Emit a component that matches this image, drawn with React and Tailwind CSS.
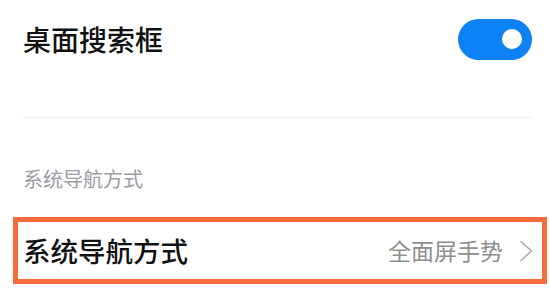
import React, { useState } from "react";

const font = { fontFamily: '"Noto Sans CJK SC", "Noto Sans", sans-serif' };

export default function App() {
  const [on, setOn] = useState(true);

  return (
    <div className="w-[550px] h-[294px] bg-white overflow-hidden" style={font}>
      {/* 桌面搜索框 */}
      <div className="h-[78px] flex items-center justify-between pl-[23px] pr-[18px]">
        <span className="text-[28px] leading-none font-medium text-[#111111]">桌面搜索框</span>
        <button
          onClick={() => setOn(!on)}
          className={`w-[74px] h-[41px] rounded-full flex items-center px-[10px] ${
            on ? "bg-[#0d82f6] justify-end" : "bg-[#d9d9d9] justify-start"
          }`}
        >
          <span className="w-[20px] h-[20px] rounded-full bg-white" />
        </button>
      </div>

      <div className="mt-[39px] ml-[22px] mr-[18px] h-px bg-[#ededed]" />

      {/* 分组标题 */}
      <div className="mt-[47px] pl-[23px] h-[28px] flex items-center">
        <span className="text-[20px] leading-none text-[#9c9ca4]">系统导航方式</span>
      </div>

      {/* 高亮行 */}
      <div className="mt-[24px] ml-[13px] mr-[3px] h-[67px] border-[5px] border-[#f76b3b] flex items-center justify-between pl-[5px] pr-[9px]">
        <span className="text-[27.5px] leading-none font-medium text-[#111111]">系统导航方式</span>
        <div className="flex items-center gap-[16px]">
          <span className="text-[23px] leading-none text-[#8f8f8f]">全面屏手势</span>
          <svg width="14" height="22" viewBox="0 0 14 22" fill="none">
            <path d="M2 1.5 L12.5 11 L2 20.5" stroke="#a9a9a9" strokeWidth="1.5" strokeLinecap="round" strokeLinejoin="round" />
          </svg>
        </div>
      </div>
    </div>
  );
}
